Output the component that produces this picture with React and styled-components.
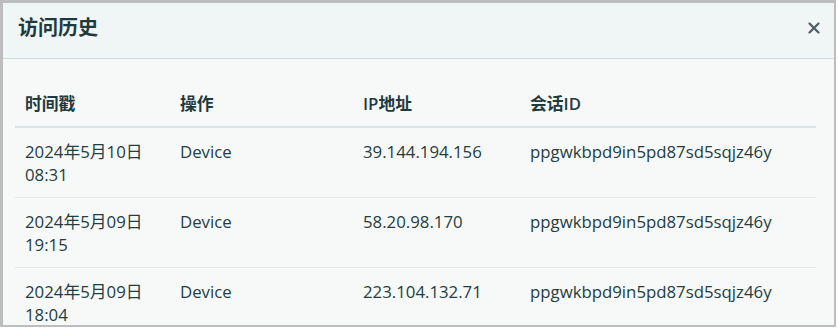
import React from 'react';
import styled, { createGlobalStyle } from 'styled-components';

const GlobalStyle = createGlobalStyle`
  html, body {
    margin: 0;
    padding: 0;
    background: #ffffff;
  }
  body {
    font-family: "Open Sans", "Noto Sans CJK SC", sans-serif;
    color: #1f3a3d;
  }
`;

const Modal = styled.div`
  width: 836px;
  height: 327px;
  box-sizing: border-box;
  border: 2px solid #bdbdbd;
  border-left-width: 3px;
  border-top-width: 3px;
  background: #f7f9f9;
  overflow: hidden;
  display: flex;
  flex-direction: column;
`;

const Header = styled.div`
  height: 56px;
  box-sizing: border-box;
  flex: none;
  display: flex;
  align-items: flex-start;
  justify-content: space-between;
  padding: 10px 12px 0 15px;
  background: #f0f5f6;
  border-bottom: 1px solid #d3dadb;
`;

const Title = styled.h2`
  margin: 0;
  font-size: 20px;
  line-height: 30px;
  font-weight: 600;
  color: #1f3a3d;
`;

const CloseButton = styled.button`
  border: none;
  background: none;
  padding: 0;
  width: 16px;
  height: 30px;
  display: flex;
  align-items: center;
  justify-content: center;
  cursor: pointer;
  color: #4b5f60;
`;

const Body = styled.div`
  padding: 21px 20px 0 12px;
`;

const Table = styled.table`
  width: 801px;
  border-collapse: collapse;
  font-size: 16.8px;
  line-height: 23px;
`;

const HeadCell = styled.th`
  text-align: left;
  font-weight: 600;
  padding: 12px 10px 11px;
  border-bottom: 2px solid #dde3e4;
  width: ${p => p.w}px;
`;

const Row = styled.tr`
  border-bottom: 1px solid #e2e7e8;
`;

const Cell = styled.td`
  vertical-align: top;
  padding: 12px 10px 11px;
  font-weight: 400;
  color: #243d40;
`;

const Time = styled.span`
  display: block;
  width: 130px;
`;

const columns = [
  { label: '时间戳', w: 135 },
  { label: '操作', w: 163 },
  { label: 'IP地址', w: 147 },
  { label: '会话ID', w: 276 },
];

const visits = [
  { date: '2024年5月10日', time: '08:31', action: 'Device', ip: '39.144.194.156', session: 'ppgwkbpd9in5pd87sd5sqjz46y' },
  { date: '2024年5月09日', time: '19:15', action: 'Device', ip: '58.20.98.170', session: 'ppgwkbpd9in5pd87sd5sqjz46y' },
  { date: '2024年5月09日', time: '18:04', action: 'Device', ip: '223.104.132.71', session: 'ppgwkbpd9in5pd87sd5sqjz46y' },
];

const App = () => (
  <>
    <GlobalStyle />
    <Modal>
      <Header>
        <Title>访问历史</Title>
        <CloseButton aria-label="关闭">
          <svg width="12" height="12" viewBox="0 0 12 12">
            <path d="M1.5 1.5 L10.5 10.5 M10.5 1.5 L1.5 10.5" stroke="currentColor" strokeWidth="2.2" strokeLinecap="round" />
          </svg>
        </CloseButton>
      </Header>
      <Body>
        <Table>
          <thead>
            <tr>
              {columns.map(c => (
                <HeadCell key={c.label} w={c.w}>{c.label}</HeadCell>
              ))}
            </tr>
          </thead>
          <tbody>
            {visits.map((v, i) => (
              <Row key={i}>
                <Cell><Time>{v.date} {v.time}</Time></Cell>
                <Cell>{v.action}</Cell>
                <Cell>{v.ip}</Cell>
                <Cell>{v.session}</Cell>
              </Row>
            ))}
          </tbody>
        </Table>
      </Body>
    </Modal>
  </>
);

export default App;
